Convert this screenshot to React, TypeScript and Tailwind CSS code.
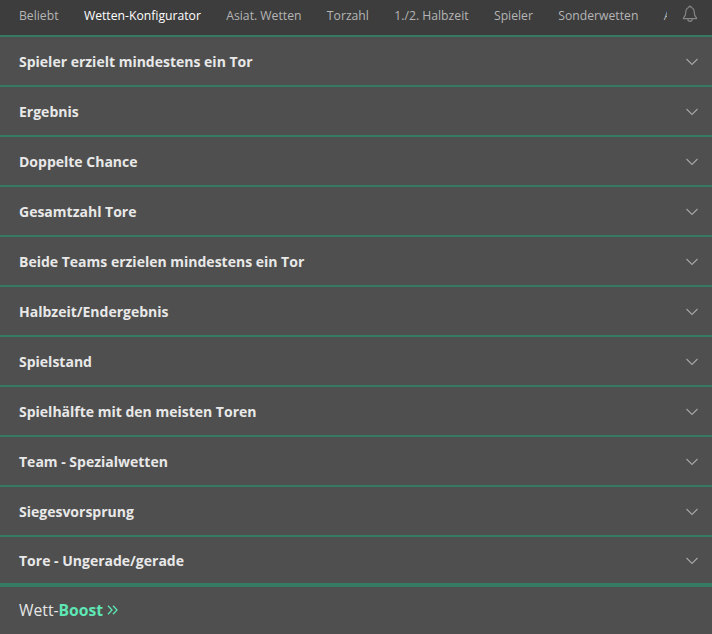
import React from "react";

const tabs = ["Beliebt", "Wetten-Konfigurator", "Asiat. Wetten", "Torzahl", "1./2. Halbzeit", "Spieler", "Sonderwetten"];
const rows = [
  "Spieler erzielt mindestens ein Tor",
  "Ergebnis",
  "Doppelte Chance",
  "Gesamtzahl Tore",
  "Beide Teams erzielen mindestens ein Tor",
  "Halbzeit/Endergebnis",
  "Spielstand",
  "Spielhälfte mit den meisten Toren",
  "Team - Spezialwetten",
  "Siegesvorsprung",
  "Tore - Ungerade/gerade",
];

export default function App() {
  return (
    <div className="w-[712px] h-[634px] overflow-hidden bg-[#4f4f4f] font-['Open_Sans','Noto_Sans',sans-serif]">
      <div className="flex h-[37px] bg-[#3d3d3d] border-b-2 border-[#357a62]">
        <div className="flex w-[667px] shrink-0 overflow-hidden pl-[19px] gap-[25.4px]">
          {tabs.map((t, i) => (
            <div
              key={t}
              className={
                "h-[37px] shrink-0 pt-[7px] text-[12.2px] leading-[18px] " +
                (i === 1 ? "text-white border-b-2 border-[#e6e6e6]" : "text-[#b5b5b5]")
              }
            >
              {t}
            </div>
          ))}
          <div className="h-[37px] shrink-0 pt-[7px] text-[12.2px] leading-[18px] text-[#b5b5b5]">Alle</div>
        </div>
        <div className="flex-1 bg-[#3d3d3d] flex justify-center pt-[5px]">
          <svg width="16" height="18" viewBox="0 0 16 18" fill="none" stroke="#858585" strokeWidth="1.2">
            <path d="M8 1.2c.8 0 1.2.5 1.2 1.3 2.3.6 3 2.5 3 4.8 0 2.8.8 4.2 2.3 5.6v.8H1.5v-.8C3 11.5 3.8 10.100 3.800 7.300c0-2.300.7-4.200 3-4.800C6.800 1.700 7.200 1.200 8 1.200Z" />
            <path d="M5.800 13.900c0 1.400 1 2.400 2.200 2.400s2.200-1 2.200-2.400" />
          </svg>
        </div>
      </div>
      {rows.map((r, i) => (
        <div
          key={r}
          className={
            "flex items-center justify-between pl-[19px] pr-[14px] pt-[1px] h-[50px] border-[#357a62] " +
            (i === rows.length - 1 ? "border-b-4" : "border-b-2")
          }
        >
          <span className="text-[14px] font-bold leading-[20px] text-[#e8e8e8]">{r}</span>
          <svg width="12" height="8" viewBox="0 0 12 8" fill="none" stroke="#a6a6a6" strokeWidth="1.1">
            <path d="M.5 1 6 6.500 11.500 1" />
          </svg>
        </div>
      ))}
      <div className="flex items-center h-[47px] pb-[2px] pl-[19px] text-[15.7px] leading-[20px] text-[#e6e6e6]">
        <span>Wett-</span>
        <span className="font-bold text-[#5ee6b4]">Boost</span>
        <svg className="ml-[4px] mt-[1px]" width="11" height="10" viewBox="0 0 11 10" fill="none" stroke="#5ee6b4" strokeWidth="1.300">
          <path d="M1 .8 5 5 1 9.200M6 .8 10 5l-4 4.200" />
        </svg>
      </div>
    </div>
  );
}
